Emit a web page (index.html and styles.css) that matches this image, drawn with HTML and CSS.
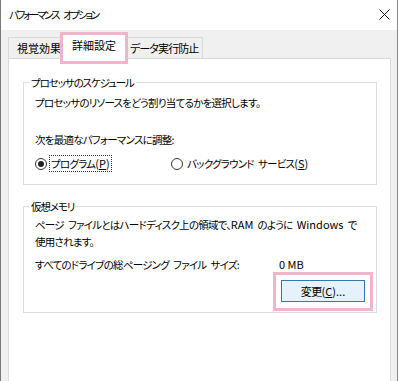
FILE: index.html
```html
<!DOCTYPE html>
<html lang="ja">
<head>
<meta charset="utf-8">
<link rel="stylesheet" href="styles.css">
</head>
<body>
<div class="window">
  <div class="titlebar">
    <span class="title">パフォーマンス オプション</span>
    <svg class="close" width="11" height="11" viewBox="0 0 11 11"><path d="M0.5 0.5L10.5 10.5M10.5 0.5L0.5 10.5" stroke="#111" stroke-width="1" fill="none"/></svg>
  </div>
  <div class="body">
    <div class="tabs">
      <div class="tab first">視覚効果</div>
      <div class="tab active">詳細設定<span class="hl hl-tab"></span></div>
      <div class="tab last">データ実行防止</div>
    </div>
    <div class="panel">
      <fieldset class="group g1">
        <legend>プロセッサのスケジュール</legend>
        <p class="line">プロセッサのリソースをどう割り当てるかを選択します。</p>
        <p class="line l2">次を最適なパフォーマンスに調整:</p>
        <div class="radios">
          <div class="radio r1"><span class="dot checked"></span><span class="rlabel focus">プログラム<span class="lat">(<u>P</u>)</span></span></div>
          <div class="radio r2"><span class="dot"></span><span class="rlabel">バックグラウンド サービス<span class="lat">(<u>S</u>)</span></span></div>
        </div>
      </fieldset>
      <fieldset class="group g2">
        <legend>仮想メモリ</legend>
        <p class="line">ページ ファイルとはハードディスク上の領域で、<span class="lat">RAM</span> のように <span class="lat">Windows</span> で<br>使用されます。</p>
        <div class="sizerow"><span class="slabel">すべてのドライブの総ページング ファイル サイズ:</span><span class="svalue lat">0 MB</span></div>
        <div class="btnrow"><button class="btn">変更<span class="lat">(<u>C</u>)...</span><span class="hl hl-btn"></span></button></div>
      </fieldset>
    </div>
  </div>
</div>
</body>
</html>
```
FILE: styles.css
```css
html, body {
  margin: 0;
  padding: 0;
  background: #ffffff;
}
body {
  width: 400px;
  height: 381px;
  overflow: hidden;
  font-family: "Noto Sans CJK JP", "Noto Sans", sans-serif;
  font-size: 10.5px;
  color: #000;
  font-feature-settings: "palt" 1;
  letter-spacing: -0.75px;
  word-spacing: 2.5px;
  white-space: nowrap;
}
.lat {
  letter-spacing: 0;
  font-size: 11px;
}
.svalue {
  word-spacing: 0;
}
.window {
  width: 396px;
  height: 381px;
  border-left: 1px solid #7a7a7a;
  border-right: 1px solid #8a8a8a;
  display: flex;
  flex-direction: column;
  background: #ffffff;
}
.titlebar {
  height: 30px;
  display: flex;
  align-items: center;
  justify-content: space-between;
  padding: 0 7px 0 8px;
  background: #ffffff;
  flex: none;
}
.title {
  font-size: 10.5px;
  letter-spacing: -2.3px;
  word-spacing: 5px;
  margin-top: -2px;
}
.close {
  margin-top: -2px;
}
.body {
  flex: 1;
  background: #f0f0f0;
  padding: 0 6px 0 7px;
  display: flex;
  flex-direction: column;
}
.tabs {
  height: 28px;
  display: flex;
  align-items: flex-end;
  flex: none;
}
.tab {
  height: 21px;
  box-sizing: border-box;
  border: 1px solid #d9d9d9;
  border-bottom: none;
  background: #f0f0f0;
  display: flex;
  align-items: center;
  padding: 0 4px 1px 8px;
  position: relative;
  flex: none;
  font-size: 11px;
  letter-spacing: 0;
}
.tab.first {
  width: 55px;
}
.tab.last {
  width: 76px;
  padding-left: 3px;
  border-left: none;
  letter-spacing: -0.9px;
}
.tab.active {
  height: 26px;
  width: 64px;
  margin-bottom: -1px;
  background: #ffffff;
  z-index: 2;
  padding: 0 0 3px 9px;
  border-left: none;
}
.hl {
  position: absolute;
  border: 3px solid #f1b4ca;
  pointer-events: none;
}
.hl-tab {
  left: -3px;
  right: -2px;
  top: -2px;
  bottom: -5px;
}
.panel {
  flex: 1;
  background: #ffffff;
  border: 1px solid #d9d9d9;
  border-bottom: none;
  padding: 15px 13px 0 14px;
  position: relative;
  z-index: 1;
}
.group {
  margin: 0;
  border: 1px solid #dcdcdc;
  padding: 3px 11px 12px 11px;
  min-width: 0;
}
.group legend {
  padding: 0 2px;
  margin-left: -6px;
  line-height: 17px;
  letter-spacing: -1.1px;
}
.line {
  margin: 0;
  line-height: 17px;
}
.l2 {
  margin-top: 20px;
}
.radios {
  margin-top: 7px;
  display: flex;
  height: 17px;
  align-items: center;
}
.radio {
  display: flex;
  align-items: center;
}
.r1 {
  width: 136px;
}
.dot {
  width: 12px;
  height: 12px;
  border: 1px solid #333;
  border-radius: 50%;
  box-sizing: border-box;
  display: flex;
  align-items: center;
  justify-content: center;
  margin-right: 2px;
  background: #fff;
}
.dot.checked::after {
  content: "";
  width: 6px;
  height: 6px;
  border-radius: 50%;
  background: #222;
}
.rlabel {
  line-height: 15px;
  padding: 0 1px;
  border: 1px solid transparent;
}
.rlabel.focus {
  border: 1px dotted #333;
}
.g2 {
  margin-top: 13px;
  padding-top: 1px;
  padding-bottom: 10px;
}
.sizerow {
  margin-top: 6px;
  display: flex;
  line-height: 17px;
}
.slabel {
  width: 244px;
}
.btnrow {
  display: flex;
  justify-content: flex-end;
  margin-top: 7px;
  padding-right: 0;
}
.btn {
  position: relative;
  width: 84px;
  height: 22px;
  box-sizing: border-box;
  background: #e5f1fb;
  border: 1px solid #2f79b0;
  font-family: "Noto Sans CJK JP", "Noto Sans", sans-serif;
  font-size: 11px;
  letter-spacing: -0.6px;
  color: #000;
  padding: 0;
  font-feature-settings: "palt" 1;
}
.hl-btn {
  left: -9px;
  right: -9px;
  top: -9px;
  bottom: -10px;
}
```
